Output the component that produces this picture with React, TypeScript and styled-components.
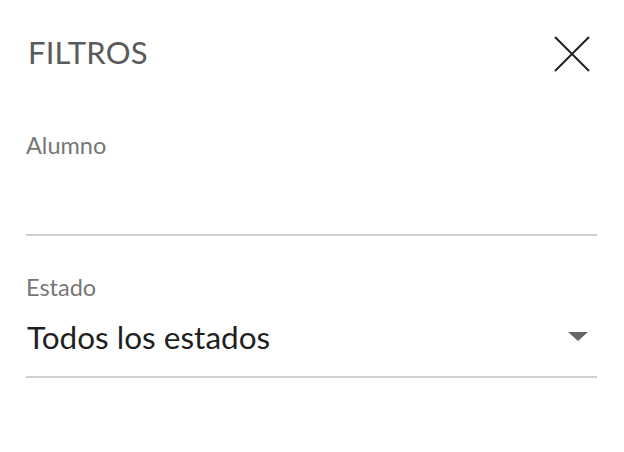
import React, { useState } from 'react';
import styled, { createGlobalStyle } from 'styled-components';

const GlobalStyle = createGlobalStyle`
  html, body {
    margin: 0;
    padding: 0;
    background: #ffffff;
  }
  body {
    font-family: Lato, 'Noto Sans', sans-serif;
  }
`;

const Panel = styled.div`
  width: 624px;
  height: 452px;
  box-sizing: border-box;
  padding: 0 27px 0 26px;
  background: #ffffff;
  display: flex;
  flex-direction: column;
`;

const Header = styled.div`
  display: flex;
  align-items: center;
  justify-content: space-between;
  height: 72px;
  padding-top: 18px;
  margin-bottom: 41.5px;
`;

const Title = styled.h1`
  margin: 0 0 5px 2px;
  font-size: 31px;
  font-weight: 400;
  color: #5a5a5a;
  letter-spacing: 0.2px;
`;

const CloseButton = styled.button`
  width: 40px;
  height: 40px;
  margin-right: 5px;
  padding: 0;
  border: none;
  background: none;
  display: flex;
  align-items: center;
  justify-content: center;
  cursor: pointer;
`;

const Field = styled.div`
  display: flex;
  flex-direction: column;
  border-bottom: 2px solid #cfcfcf;
  margin-bottom: 38px;
`;

const Label = styled.label`
  font-size: 23.5px;
  line-height: 26px;
  color: #777777;
`;

const TextInput = styled.input`
  height: 76px;
  padding: 0;
  border: none;
  outline: none;
  background: transparent;
  font-family: inherit;
  font-size: 31.5px;
  color: #222;
`;

const SelectRow = styled.div`
  display: flex;
  align-items: center;
  justify-content: space-between;
  height: 74px;
  margin-bottom: 2px;
  cursor: pointer;
`;

const SelectValue = styled.span`
  margin-left: 1px;
  font-size: 31.5px;
  color: #1f1f1f;
`;

const Caret = styled.span`
  width: 0;
  height: 0;
  margin-right: 9px;
  border-left: 10px solid transparent;
  border-right: 10px solid transparent;
  border-top: 9px solid #666666;
`;

const App = () => {
  const [alumno, setAlumno] = useState('');

  return (
    <>
      <GlobalStyle />
      <Panel>
        <Header>
          <Title>FILTROS</Title>
          <CloseButton aria-label="Cerrar">
            <svg width="36" height="36" viewBox="0 0 36 36">
              <path d="M1 1 L35 35 M35 1 L1 35" stroke="#222" strokeWidth="2" />
            </svg>
          </CloseButton>
        </Header>
        <Field>
          <Label>Alumno</Label>
          <TextInput value={alumno} onChange={(e) => setAlumno(e.target.value)} />
        </Field>
        <Field>
          <Label>Estado</Label>
          <SelectRow>
            <SelectValue>Todos los estados</SelectValue>
            <Caret />
          </SelectRow>
        </Field>
      </Panel>
    </>
  );
};

export default App;
